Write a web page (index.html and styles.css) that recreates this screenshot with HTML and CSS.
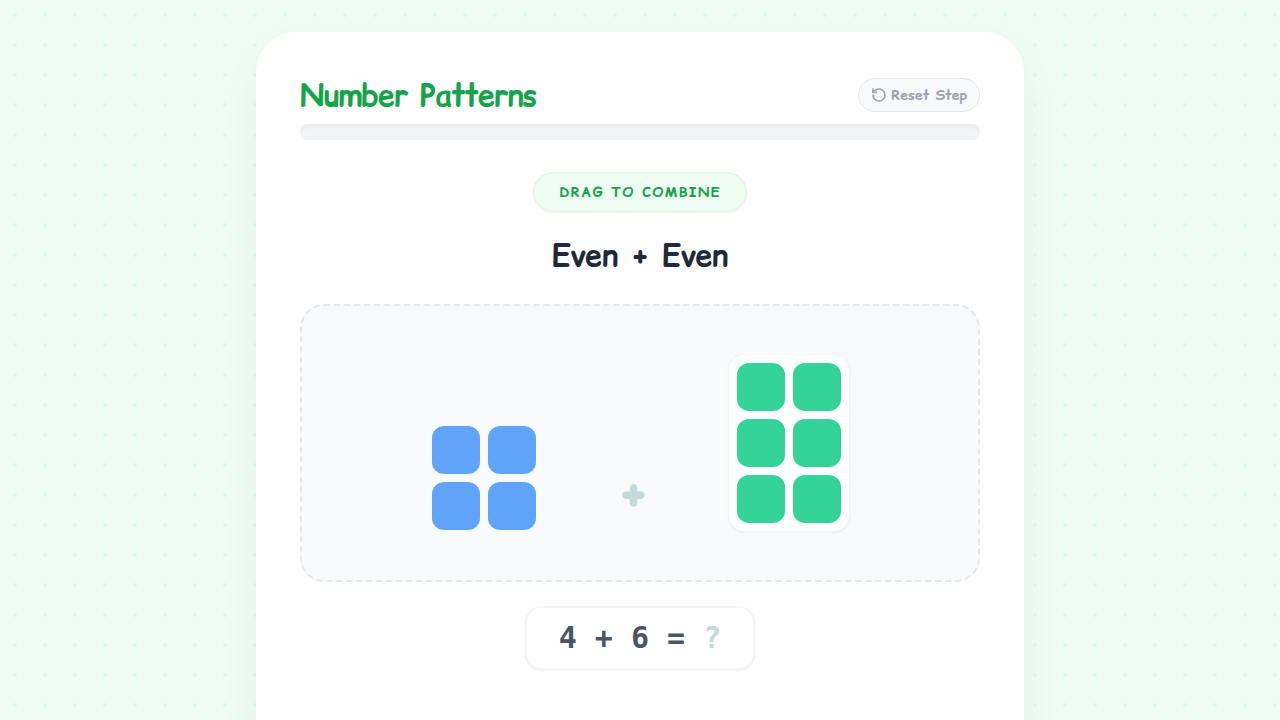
FILE: index.html
```
<!DOCTYPE html>
<html lang="en">
<head>
  <meta charset="UTF-8">
  <meta name="viewport" content="width=device-width, initial-scale=1">
  <title>Number Patterns</title>
  <link rel="stylesheet" href="styles.css">
</head>
<body>
  <main class="card">
    <header class="header">
      <h1>Number Patterns</h1>
      <button type="button" class="reset">
        <svg class="reset-icon" viewBox="0 0 24 24" fill="none" stroke="currentColor" stroke-width="2.5" stroke-linecap="round" stroke-linejoin="round" aria-hidden="true">
          <path d="M3 12a9 9 0 1 0 9-9 9.75 9.75 0 0 0-6.74 2.74L3 8"/>
          <path d="M3 3v5h5"/>
        </svg>
        Reset Step
      </button>
    </header>

    <div class="progress"></div>

    <section class="step">
      <span class="badge">Drag to combine</span>
      <h2>Even + Even</h2>

      <div class="board">
        <div class="group blue" draggable="true">
          <div class="cell"></div>
          <div class="cell"></div>
          <div class="cell"></div>
          <div class="cell"></div>
        </div>
        <span class="plus">+</span>
        <div class="group green">
          <div class="cell"></div>
          <div class="cell"></div>
          <div class="cell"></div>
          <div class="cell"></div>
          <div class="cell"></div>
          <div class="cell"></div>
        </div>
      </div>

      <div class="equation">4 + 6 = <span class="unknown">?</span></div>
    </section>
  </main>
</body>
</html>
```

FILE: styles.css
```
* {
  box-sizing: border-box;
}

body {
  margin: 0;
  padding: 32px 16px;
  min-height: 100vh;
  font-family: "Comic Relief", "Comic Sans MS", cursive;
  background-color: #f0fdf4;
  background-image: radial-gradient(#dcfce7 2px, transparent 2px);
  background-size: 30px 30px;
}

h1,
h2 {
  margin: 0;
  font-weight: 900;
}

.card {
  max-width: 768px;
  margin: 0 auto;
  padding: 46px 44px 120px;
  background: #fff;
  border-radius: 40px;
  box-shadow: 0 20px 40px rgba(0, 0, 0, 0.05);
}

.header {
  display: flex;
  justify-content: space-between;
  align-items: center;
  margin-bottom: 12px;
}

h1 {
  font-size: 30px;
  line-height: 34px;
  letter-spacing: -0.025em;
  color: #16a34a;
}

.reset {
  display: flex;
  align-items: center;
  gap: 4px;
  height: 34px;
  padding: 0 12px;
  font-family: inherit;
  font-size: 14px;
  font-weight: bold;
  color: #9ca3af;
  background: #f9fafb;
  border: 1px solid #e5e7eb;
  border-radius: 17px;
  cursor: pointer;
}

.reset-icon {
  width: 16px;
  height: 16px;
}

.progress {
  height: 16px;
  background: #f3f4f6;
  border-radius: 8px;
  box-shadow: inset 0 2px 4px rgba(0, 0, 0, 0.05);
}

.step {
  display: flex;
  flex-direction: column;
  align-items: center;
  margin-top: 32px;
}

.badge {
  padding: 8px 24px;
  font-size: 14px;
  font-weight: bold;
  line-height: 20px;
  letter-spacing: 0.1em;
  text-transform: uppercase;
  color: #16a34a;
  background: #f0fdf4;
  border: 2px solid #dcfce7;
  border-radius: 20px;
  box-shadow: 0 1px 2px rgba(0, 0, 0, 0.05);
}

h2 {
  margin: 24px 0 30px;
  font-size: 30px;
  line-height: 38px;
  color: #1f2937;
}

/* drop area */
.board {
  display: flex;
  justify-content: center;
  align-items: flex-end;
  gap: 80px;
  width: 100%;
  padding: 48px 16px;
  background: #f9fafb;
  border: 2px dashed #e5e7eb;
  border-radius: 24px;
}

.group {
  display: grid;
  grid-template-columns: 48px 48px;
  gap: 8px;
}

.cell {
  height: 48px;
  border-radius: 12px;
}

.blue {
  border: 2px solid transparent;
  cursor: grab;
}

.blue .cell {
  background: #60a5fa;
}

.green {
  padding: 8px;
  background: #fff;
  border: 1px solid #f3f4f6;
  border-radius: 16px;
  box-shadow: 0 1px 2px rgba(0, 0, 0, 0.05);
}

.green .cell {
  background: #34d399;
}

.plus {
  width: 30px;
  margin-bottom: 16px;
  font-size: 48px;
  font-weight: 900;
  line-height: 46px;
  text-align: center;
  color: #c5d8da;
  -webkit-text-stroke: 1px currentColor;
}

.equation {
  margin-top: 24px;
  padding: 12px 32px;
  font-family: "DejaVu Sans Mono", monospace;
  font-size: 30px;
  font-weight: bold;
  line-height: 36px;
  color: #4b5563;
  background: #fff;
  border: 2px solid #f3f4f6;
  border-radius: 16px;
  box-shadow: 0 1px 2px rgba(0, 0, 0, 0.05);
}

.unknown {
  color: #c5d8da;
}

@media (max-width: 600px) {
  .card {
    padding: 24px;
  }

  .board {
    gap: 16px;
  }
}
```
